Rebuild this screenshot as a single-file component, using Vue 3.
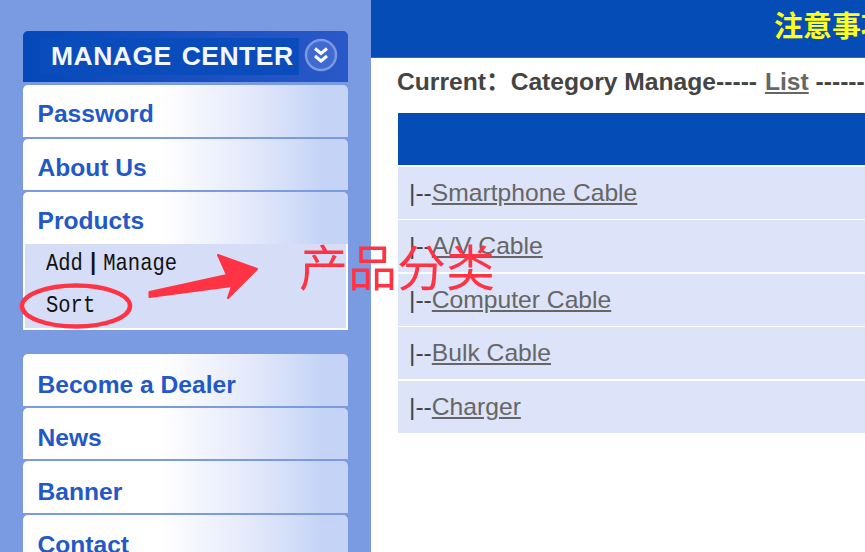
<template>
  <div class="page">
    <aside class="sidebar">
      <div class="panel-head">
        <span class="head-title">MANAGE CENTER</span>
        <svg class="head-icon" width="34" height="34" viewBox="0 0 34 34">
          <circle cx="17" cy="17" r="15" fill="#3f6bd0" stroke="#7c98e0" stroke-width="2.5" />
          <path d="M11 10.5 L17 15.5 L23 10.5 M11 18 L17 23 L23 18" fill="none" stroke="#fff" stroke-width="3" />
        </svg>
      </div>

      <div class="menu-group">
        <a v-for="item in topMenu" :key="item" class="menu-item">{{ item }}</a>
        <div class="submenu">
          <div class="sub-row">Add <b class="sep">|</b> Manage</div>
          <div class="sub-row">Sort</div>
        </div>
      </div>

      <div class="menu-group lower">
        <a v-for="item in lowerMenu" :key="item" class="menu-item">{{ item }}</a>
      </div>
    </aside>

    <main class="content">
      <div class="top-bar"><span class="notice">注意事项</span></div>
      <div class="crumb">Current：Category Manage----- <a class="crumb-link">List</a> -------</div>
      <div class="table">
        <div class="table-head"></div>
        <div v-for="row in categories" :key="row" class="table-row">|--<a>{{ row }}</a></div>
      </div>
    </main>

    <!-- red annotations drawn on top of the screenshot -->
    <svg class="marks" width="865" height="552" viewBox="0 0 865 552">
      <ellipse cx="76" cy="306" rx="54" ry="20.5" fill="none" stroke="#ff3344" stroke-width="4.5" />
      <path d="M149.5 292 L227 275 L218 255 L257 269 L228 298 L232 286 L149.5 297 Z" fill="#ff3344" stroke="#ff3344" stroke-width="2" stroke-linejoin="round" />
    </svg>
    <div class="mark-label">产品分类</div>
  </div>
</template>

<script setup>
const topMenu = ['Password', 'About Us', 'Products']
const lowerMenu = ['Become a Dealer', 'News', 'Banner', 'Contact']
const categories = ['Smartphone Cable', 'A/V Cable', 'Computer Cable', 'Bulk Cable', 'Charger']
</script>

<style>
html,
body {
  margin: 0;
  overflow: hidden;
  background: #fff;
}
</style>

<style scoped>
.page {
  position: relative;
  display: flex;
  width: 865px;
  height: 552px;
  overflow: hidden;
  font-family: "Liberation Sans", "Noto Sans CJK SC", sans-serif;
}

.sidebar {
  box-sizing: border-box;
  flex: 0 0 371px;
  padding: 31px 23px 0;
  background: #7a9ae2;
}

.panel-head {
  display: flex;
  align-items: center;
  justify-content: space-between;
  height: 51px;
  padding: 0 10px 0 17px;
  border-radius: 5px 5px 0 0;
  background: linear-gradient(90deg, #0548b8, #2a58c8);
}

.head-title {
  padding: 3px 5px 3px 11px;
  background: #0b4cbc;
  color: #f4f7ff;
  font-size: 26.5px;
  font-weight: 700;
  letter-spacing: 0.5px;
  word-spacing: 2px;
  white-space: nowrap;
}

.head-icon {
  margin-bottom: 3px;
}

.menu-group {
  display: flex;
  flex-direction: column;
  gap: 2px;
  margin-top: 3px;
}

.menu-group.lower {
  margin-top: 24.5px;
}

.menu-group.lower .menu-item {
  padding-top: 14.5px;
}

.menu-item {
  box-sizing: border-box;
  height: 51.5px;
  padding: 13px 0 0 14.5px;
  border-radius: 5px 5px 0 0;
  background: linear-gradient(90deg, #fff 0%, #fff 42%, #e6ebfb 68%, #c5d4f6 92%, #c5d4f6 100%);
  color: #2258c8;
  font-size: 24.6px;
  font-weight: 700;
  line-height: 32px;
}

.submenu {
  box-sizing: border-box;
  height: 86px;
  margin-top: -2px;
  padding-left: 21px;
  border: solid #fff;
  border-width: 0 2px 2px;
  background: #d6ddf6;
  color: #111;
  font-family: "Liberation Mono", monospace;
  font-size: 20.5px;
  word-spacing: -8.3px;
}

.sub-row {
  height: 42px;
  line-height: 40px;
  transform: scaleY(1.2);
}

.sep {
  font-weight: 700;
}

.content {
  flex: 1;
  min-width: 0;
}

.top-bar {
  height: 57px;
  border-bottom: 1px solid #2f68c6;
  background: #054cb6;
  text-align: left;
  white-space: nowrap;
}

.notice {
  display: inline-block;
  margin-left: 403px;
  color: #ffff19;
  font-size: 29px;
  font-weight: 700;
  line-height: 54px;
}

.crumb {
  margin: 9px 0 0 26px;
  color: #444;
  font-size: 24.65px;
  font-weight: 700;
  line-height: 30px;
  white-space: nowrap;
}

.crumb-link {
  margin-left: 1px;
  color: #666;
  text-decoration: underline;
}

.table {
  display: flex;
  flex-direction: column;
  margin: 16px 0 0 27px;
}

.table-head {
  height: 52px;
  background: #054cb6;
}

.table-row {
  box-sizing: border-box;
  height: 52px;
  margin-top: 1.5px;
  padding-left: 11px;
  background: #dde3f8;
  color: #444;
  font-size: 24.65px;
  line-height: 52px;
  white-space: nowrap;
}

.table-row a {
  color: #666;
  text-decoration: underline;
}

.marks {
  position: absolute;
  top: 0;
  left: 0;
  pointer-events: none;
}

.mark-label {
  position: absolute;
  top: 230px;
  left: 299px;
  color: #ff3344;
  font-family: "Noto Sans CJK SC", sans-serif;
  font-size: 49px;
  font-weight: 400;
  line-height: 70px;
  white-space: nowrap;
}
</style>
